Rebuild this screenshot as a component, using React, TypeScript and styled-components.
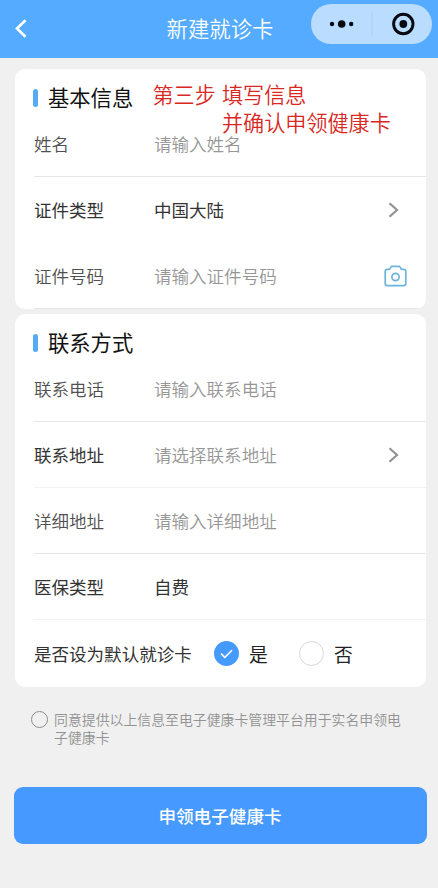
import React from "react";
import styled, { createGlobalStyle } from "styled-components";

const GlobalStyle = createGlobalStyle`
  * { box-sizing: border-box; }
  body {
    margin: 0;
    background: #f0f0f0;
    font-family: "Noto Sans CJK SC", sans-serif;
  }
`;

const Page = styled.div`
  height: 888px;
  display: flex;
  flex-direction: column;
  overflow: hidden;
  position: relative;
`;

const NavBar = styled.header`
  height: 58px;
  flex: none;
  display: grid;
  grid-template-columns: 127px 1fr 127px;
  align-items: start;
  background: #54abff;
`;

const BackButton = styled.button`
  display: flex;
  width: 32px;
  height: 56px;
  padding: 0 0 0 14px;
  align-items: center;
  border: 0;
  background: none;
`;

const NavTitle = styled.h1`
  margin: 0;
  padding-left: 2px;
  font-size: 21.4px;
  font-weight: 350;
  line-height: 56px;
  text-align: center;
  white-space: nowrap;
  color: #fff;
`;

const Capsule = styled.div`
  display: flex;
  width: 121px;
  height: 40px;
  margin-top: 4px;
  border-radius: 20px;
  background: #badcff;
`;

const Card = styled.section`
  width: 411px;
  flex: none;
  margin-left: 15px;
  border-radius: 10px;
  background: #fff;
  overflow: hidden;
`;

const Cards = styled.main`
  display: flex;
  flex-direction: column;
  gap: 5px;
  padding-top: 11px;
`;

const SectionTitle = styled.h2`
  display: flex;
  align-items: center;
  gap: 10px;
  height: 42px;
  margin: 0;
  padding: 13px 0 0 18px;
  font-size: 21.3px;
  font-weight: 400;
  line-height: 28px;
  color: #111;

  &::before {
    content: "";
    width: 5px;
    height: 18px;
    margin-top: 3px;
    border-radius: 2.5px;
    background: #54abf4;
  }
`;

const Row = styled.div<{ $line?: string; $tall?: boolean }>`
  display: flex;
  align-items: center;
  height: ${({ $tall }) => ($tall ? 67 : 66)}px;
  padding-top: ${({ $tall }) => ($tall ? 1 : 0)}px;
  margin-left: 19px;
  padding-right: 19px;
  border-bottom: 1px solid ${({ $line }) => $line ?? "#e6e6e6"};
  font-size: 17.55px;
  line-height: 26px;
  white-space: nowrap;
`;

const Label = styled.span<{ $soft?: boolean }>`
  width: 120px;
  flex: none;
  font-weight: ${({ $soft }) => ($soft ? 350 : 400)};
  color: ${({ $soft }) => ($soft ? "#505050" : "#333")};
`;

const Value = styled.span<{ $placeholder?: boolean }>`
  flex: 1;
  font-weight: ${({ $placeholder }) => ($placeholder ? 350 : 400)};
  color: ${({ $placeholder }) => ($placeholder ? "#969696" : "#333")};
`;

const ArrowSlot = styled.span`
  display: flex;
  margin-right: 8px;
`;

const Question = styled.span`
  width: 180px;
  color: #333;
`;

const Option = styled.label`
  display: flex;
  align-items: center;
  gap: 10px;
  width: 85px;
  font-size: 18.8px;
  color: #222;
`;

const RadioMark = styled.span<{ $on?: boolean }>`
  display: grid;
  place-items: center;
  width: 25px;
  height: 25px;
  border-radius: 50%;
  border: ${({ $on }) => ($on ? "0" : "1.5px solid #d8d8d8")};
  background: ${({ $on }) => ($on ? "#459afd" : "#fff")};
`;

const Agreement = styled.label`
  display: flex;
  gap: 6px;
  margin: 23px 0 0 31px;
  font-size: 13.88px;
  font-weight: 350;
  line-height: 18px;
  white-space: nowrap;
  color: #929292;
`;

const AgreeCircle = styled.span`
  width: 17px;
  height: 17px;
  margin-top: 1px;
  border: 1px solid #8c8c8c;
  border-radius: 50%;
`;

const SubmitButton = styled.button`
  width: 413px;
  height: 57px;
  flex: none;
  margin: 41px 0 0 13.5px;
  padding: 0;
  border: 0;
  border-radius: 9px;
  background: #4699ff;
  color: #fff;
  font: 500 17.6px/56px "Noto Sans CJK SC", sans-serif;
`;

const Annotation = styled.div`
  position: absolute;
  left: 152.5px;
  top: 80px;
  display: grid;
  grid-template-columns: 69.5px auto;
  font-size: 21.1px;
  font-weight: 350;
  line-height: 28px;
  white-space: nowrap;
  color: #d8281f;
`;

const AnnotationTail = styled.span`
  grid-column: 2;
`;

const Chevron = () => (
  <ArrowSlot>
    <svg width="11" height="16" viewBox="0 0 11 16" fill="none" stroke="#929292" strokeWidth="2.2">
      <path d="M1.5 1.2 9 8 1.5 14.8" />
    </svg>
  </ArrowSlot>
);

const Camera = () => (
  <svg width="23" height="22" viewBox="0 0 23 22" fill="none" stroke="#6db4d9" strokeWidth="1.7" strokeLinejoin="round">
    <path d="M3.2 4.4H5.6L7.4 1.4H15.6L17.4 4.4H19.8Q21.8 4.4 21.8 6.4V18.6Q21.8 20.6 19.8 20.6H3.2Q1.2 20.6 1.2 18.6V6.4Q1.2 4.4 3.2 4.4Z" />
    <circle cx="11.5" cy="12" r="3.6" />
  </svg>
);

export default function App() {
  return (
    <Page>
      <GlobalStyle />
      <NavBar>
        <BackButton aria-label="返回">
          <svg width="14" height="19" viewBox="0 0 14 19" fill="none" stroke="#fff" strokeWidth="2.7">
            <path d="M11.5 1.2 3 9.5 11.5 17.8" />
          </svg>
        </BackButton>
        <NavTitle>新建就诊卡</NavTitle>
        <Capsule>
          <svg width="121" height="40" viewBox="0 0 121 40">
            <g fill="#060a10">
              <circle cx="21" cy="20" r="2.2" />
              <circle cx="30.7" cy="20" r="3.8" />
              <circle cx="40.2" cy="20" r="2.2" />
              <circle cx="92.3" cy="20" r="3.9" />
            </g>
            <path d="M61 8V32" stroke="#a9cff5" />
            <circle cx="92.3" cy="20" r="9.7" fill="none" stroke="#060a10" strokeWidth="2.9" />
          </svg>
        </Capsule>
      </NavBar>

      <Cards>
        <Card>
          <SectionTitle>基本信息</SectionTitle>
          <Row>
            <Label $soft>姓名</Label>
            <Value $placeholder>请输入姓名</Value>
          </Row>
          <Row $line="transparent">
            <Label>证件类型</Label>
            <Value>中国大陆</Value>
            <Chevron />
          </Row>
          <Row>
            <Label $soft>证件号码</Label>
            <Value $placeholder>请输入证件号码</Value>
            <Camera />
          </Row>
        </Card>

        <Card>
          <SectionTitle>联系方式</SectionTitle>
          <Row>
            <Label $soft>联系电话</Label>
            <Value $placeholder>请输入联系电话</Value>
          </Row>
          <Row $line="#f3f3f3">
            <Label>联系地址</Label>
            <Value $placeholder>请选择联系地址</Value>
            <Chevron />
          </Row>
          <Row>
            <Label $soft>详细地址</Label>
            <Value $placeholder>请输入详细地址</Value>
          </Row>
          <Row $line="#f3f3f3">
            <Label>医保类型</Label>
            <Value>自费</Value>
          </Row>
          <Row $line="transparent" $tall>
            <Question>是否设为默认就诊卡</Question>
            <Option>
              <RadioMark $on>
                <svg width="13" height="10" viewBox="0 0 13 10" fill="none" stroke="#fff" strokeWidth="1.6">
                  <path d="M1 4.6 4.8 8.3 12 1.2" />
                </svg>
              </RadioMark>
              是
            </Option>
            <Option>
              <RadioMark />
              否
            </Option>
          </Row>
        </Card>
      </Cards>

      <Agreement>
        <AgreeCircle />
        <span>
          同意提供以上信息至电子健康卡管理平台用于实名申领电
          <br />
          子健康卡
        </span>
      </Agreement>
      <SubmitButton>申领电子健康卡</SubmitButton>

      <Annotation>
        <span>第三步</span>
        <span>填写信息</span>
        <AnnotationTail>并确认申领健康卡</AnnotationTail>
      </Annotation>
    </Page>
  );
}
